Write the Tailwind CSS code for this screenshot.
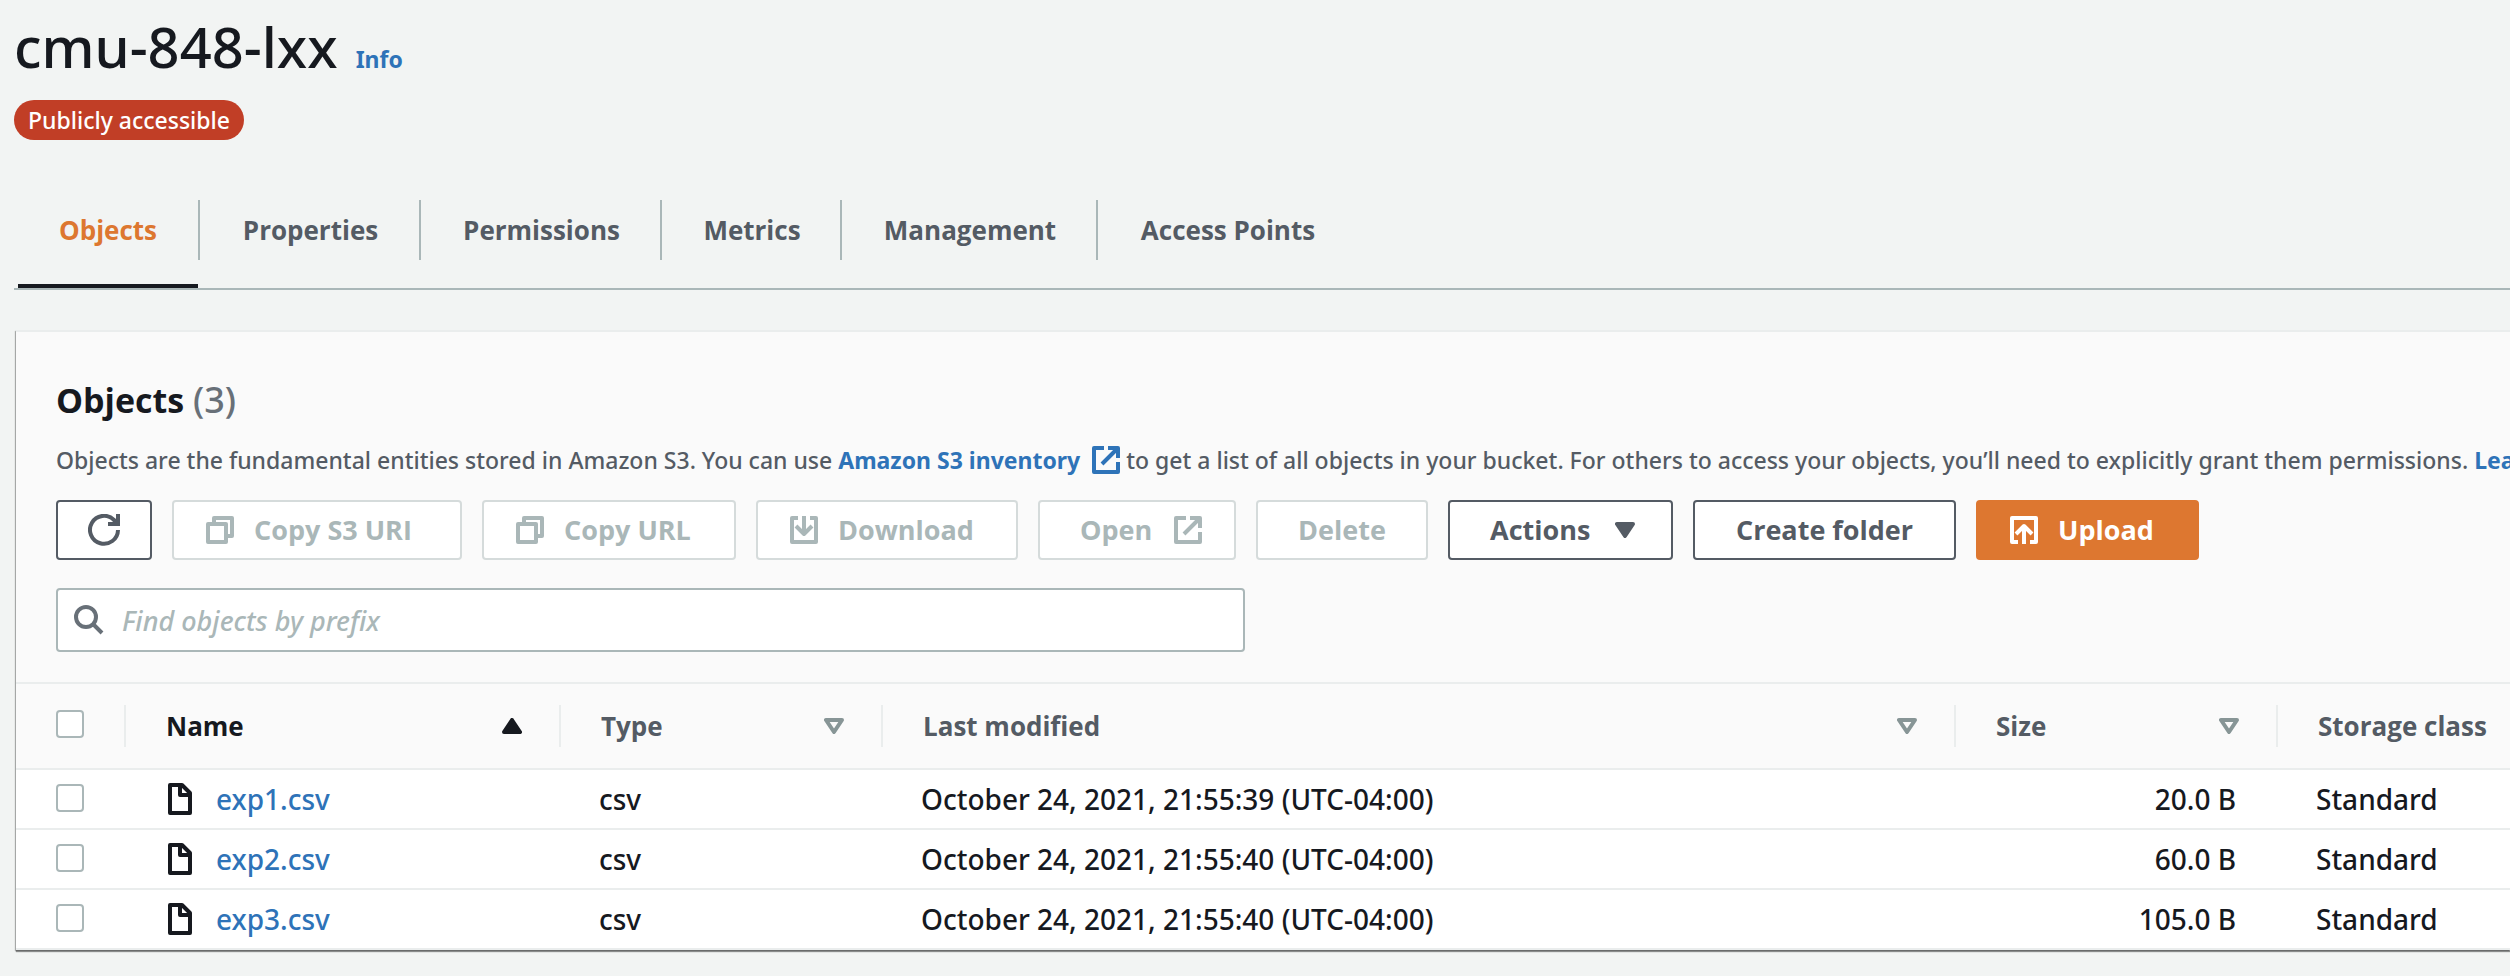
<!DOCTYPE html>
<html lang="en">
<head>
<meta charset="utf-8">
<title>cmu-848-lxx - S3 bucket</title>
<script src="https://cdn.jsdelivr.net/npm/@tailwindcss/browser@4"></script>
</head>
<body class="min-h-screen overflow-x-hidden bg-[#f2f4f3] font-['Open_Sans',sans-serif] text-[28px] leading-9 text-[#16191f]">
<svg class="hidden" aria-hidden="true">
  <symbol id="copy" viewBox="0 0 14 14"><path d="M4 3V1h9v9h-2M1 4h9v9H1z" fill="none" stroke="currentColor" stroke-width="2" stroke-linejoin="round"/></symbol>
  <symbol id="external" viewBox="0 0 14 14"><path d="M6 1H1v12h12V8M8 1h5v5M13 1 5 9" fill="none" stroke="currentColor" stroke-width="2" stroke-linejoin="round"/></symbol>
  <symbol id="download" viewBox="0 0 14 14"><path d="M4 1H1v12h12V1h-3M7 0v9M3 5l4 4 4-4" fill="none" stroke="currentColor" stroke-width="2" stroke-linejoin="round"/></symbol>
  <symbol id="upload" viewBox="0 0 14 14"><path d="M4 13H1V1h12v12h-3M7 14V5M3 9l4-4 4 4" fill="none" stroke="currentColor" stroke-width="2" stroke-linejoin="round"/></symbol>
  <symbol id="file" viewBox="0 0 12 16"><path d="M1 1h6l4 4v10H1zM6 1v5h5" fill="none" stroke="currentColor" stroke-width="2" stroke-linejoin="round"/></symbol>
  <symbol id="sort" viewBox="0 0 10 8"><path d="M1 1h8L5 7z" fill="none" stroke="currentColor" stroke-width="2" stroke-linejoin="round"/></symbol>
  <symbol id="caret" viewBox="0 0 10 8"><path d="M1 1h8L5 7z" fill="currentColor" stroke="currentColor" stroke-width="2" stroke-linejoin="round"/></symbol>
</svg>

<header class="pl-[14px] font-['Noto_Sans',sans-serif]">
  <div class="flex h-[84px] items-baseline gap-[18px]">
    <h1 class="pt-[10px] text-[56px] leading-[72px] font-medium">cmu-848-lxx</h1>
    <a href="#" class="text-[23px] font-bold text-[#2e73b8]">Info</a>
  </div>
  <span class="mt-4 inline-flex h-10 items-center rounded-[20px] bg-[#c13e26] px-[14px] text-[23px] font-medium text-white">Publicly accessible</span>
</header>

<nav class="mt-[52px] ml-[14px] border-b-2 border-[#aab7b8] pl-1 text-[26px] font-bold text-[#545b64]">
  <ul class="flex">
    <li class="relative h-24 w-[182px]"><a href="#" aria-current="page" class="block h-24 w-[180px] border-b-4 border-[#16191f] pt-5 text-center text-[#dd7730]">Objects</a><span class="absolute top-2 right-0 h-[60px] w-[2px] bg-[#aab7b8]"></span></li>
    <li class="relative h-24 w-[221px]"><a href="#" class="block pt-5 text-center">Properties</a><span class="absolute top-2 right-0 h-[60px] w-[2px] bg-[#aab7b8]"></span></li>
    <li class="relative h-24 w-[241px]"><a href="#" class="block pt-5 text-center">Permissions</a><span class="absolute top-2 right-0 h-[60px] w-[2px] bg-[#aab7b8]"></span></li>
    <li class="relative h-24 w-[180px]"><a href="#" class="block pt-5 text-center">Metrics</a><span class="absolute top-2 right-0 h-[60px] w-[2px] bg-[#aab7b8]"></span></li>
    <li class="relative h-24 w-[256px]"><a href="#" class="block pt-5 text-center">Management</a><span class="absolute top-2 right-0 h-[60px] w-[2px] bg-[#aab7b8]"></span></li>
    <li class="h-24 w-[260px]"><a href="#" class="block pt-5 text-center">Access Points</a></li>
  </ul>
</nav>

<main class="mt-10 ml-4 border-t-2 border-[#eaeded] bg-[#fafafa] shadow-[0_2px_1px_#00000066,-1px_1px_1px_#00000044]">
  <section class="pt-[42px] pl-10">
    <h2 class="text-[34px] leading-[52px] font-bold">Objects <span class="font-['Noto_Sans',sans-serif] text-4xl leading-[52px] font-medium text-[#687078]">(3)</span></h2>
    <p class="mt-[14px] flex h-10 items-center overflow-hidden font-['Noto_Sans',sans-serif] text-[23px] font-medium whitespace-pre text-[#545b64]"><span>Objects are the fundamental entities stored in Amazon S3. You can use </span><a href="#" class="flex items-center gap-3 font-bold text-[#2e73b8]"><span>Amazon S3 inventory</span><svg class="size-7"><use href="#external"/></svg></a><span> to get a list of all objects in your bucket. For others to access your objects, you’ll need to explicitly grant them permissions. </span><a href="#" class="font-bold text-[#2e73b8]">Learn more</a></p>
    <div class="mt-5 flex gap-5 text-[27px] font-bold text-[#545b64]">
      <button aria-label="Refresh" class="flex h-[60px] w-24 items-center justify-center rounded border-2 border-[#545b64] bg-white"><svg class="size-8" viewBox="0 0 16 16"><path d="M15 8a7 7 0 1 1-2-5l2 2M15 0v5h-5" fill="none" stroke="currentColor" stroke-width="2"/></svg></button>
      <button disabled class="flex h-[60px] w-[290px] items-center gap-5 rounded border-2 border-[#d5dbdb] bg-white pl-8 text-[#aab7b8]"><svg class="size-7"><use href="#copy"/></svg>Copy S3 URI</button>
      <button disabled class="flex h-[60px] w-[254px] items-center gap-5 rounded border-2 border-[#d5dbdb] bg-white pl-8 text-[#aab7b8]"><svg class="size-7"><use href="#copy"/></svg>Copy URL</button>
      <button disabled class="flex h-[60px] w-[262px] items-center gap-5 rounded border-2 border-[#d5dbdb] bg-white pl-8 text-[#aab7b8]"><svg class="size-7"><use href="#download"/></svg>Download</button>
      <button disabled class="flex h-[60px] w-[198px] items-center justify-between rounded border-2 border-[#d5dbdb] bg-white pr-8 pl-10 text-[#aab7b8]">Open<svg class="size-7"><use href="#external"/></svg></button>
      <button disabled class="h-[60px] w-[172px] rounded border-2 border-[#d5dbdb] bg-white text-[#aab7b8]">Delete</button>
      <button class="flex h-[60px] w-[225px] items-center justify-between rounded border-2 border-[#545b64] bg-white pr-9 pl-10">Actions<svg class="h-4 w-5"><use href="#caret"/></svg></button>
      <button class="h-[60px] w-[263px] rounded border-2 border-[#545b64] bg-white">Create folder</button>
      <button class="flex h-[60px] w-[223px] items-center gap-5 rounded border-2 border-[#dd7730] bg-[#dd7730] pl-8 text-white"><svg class="size-7"><use href="#upload"/></svg>Upload</button>
    </div>
    <label class="mt-7 flex h-16 w-[1189px] items-center gap-[18px] rounded border-2 border-[#aab7b8] bg-white px-4">
      <svg class="size-[30px] text-[#687078]" viewBox="0 0 15 15"><path d="M11 6A5 5 0 1 1 1 6a5 5 0 0 1 10 0zM9.500 9.500l4.500 4.500" fill="none" stroke="currentColor" stroke-width="2"/></svg>
      <input type="text" aria-label="Find objects by prefix" placeholder="Find objects by prefix" class="h-full flex-1 font-['Noto_Sans',sans-serif] text-[27px] font-medium outline-none placeholder:text-[#aab7b8] placeholder:italic">
    </label>
  </section>

  <table class="mt-[30px] w-full table-fixed border-collapse text-left">
    <colgroup><col class="w-[110px]"><col class="w-[435px]"><col class="w-[322px]"><col><col class="w-[322px]"><col class="w-[232px]"></colgroup>
    <thead class="border-y-2 border-[#eaeded] text-[26px] text-[#545b64]">
      <tr class="h-[86px]">
        <th class="p-0"><div class="flex h-[42px] items-center border-r-2 border-[#eaeded] pl-10"><input type="checkbox" aria-label="Select all" class="mb-1 size-7 appearance-none rounded border-2 border-[#aab7b8] bg-white"></div></th>
        <th class="p-0 text-[#16191f]"><div class="flex h-[42px] items-center justify-between border-r-2 border-[#eaeded] pr-[37px] pl-10">Name<svg class="h-4 w-5 rotate-180"><use href="#caret"/></svg></div></th>
        <th class="p-0"><div class="flex h-[42px] items-center justify-between border-r-2 border-[#eaeded] pr-[37px] pl-10">Type<svg class="h-4 w-5 text-[#879596]"><use href="#sort"/></svg></div></th>
        <th class="p-0"><div class="flex h-[42px] items-center justify-between border-r-2 border-[#eaeded] pr-[37px] pl-10">Last modified<svg class="h-4 w-5 text-[#879596]"><use href="#sort"/></svg></div></th>
        <th class="p-0"><div class="flex h-[42px] items-center justify-between border-r-2 border-[#eaeded] pr-[37px] pl-10">Size<svg class="h-4 w-5 text-[#879596]"><use href="#sort"/></svg></div></th>
        <th class="p-0 pl-10 whitespace-nowrap">Storage class</th>
      </tr>
    </thead>
    <tbody class="bg-white font-['Noto_Sans',sans-serif] font-medium">
      <tr class="h-[60px] border-b-2 border-[#eaeded]">
        <td class="pl-10"><input type="checkbox" aria-label="Select exp1.csv" class="mb-[2px] block size-7 appearance-none rounded border-2 border-[#aab7b8] bg-white"></td>
        <td class="pl-[42px]"><div class="flex items-center gap-6"><svg class="h-8 w-6"><use href="#file"/></svg><a href="#" class="text-[#2e73b8]">exp1.csv</a></div></td>
        <td class="pl-[38px]">csv</td><td class="pl-[38px]">October 24, 2021, 21:55:39 (UTC-04:00)</td><td class="pr-[42px] text-right">20.0 B</td><td class="pl-[38px]">Standard</td>
      </tr>
      <tr class="h-[60px] border-b-2 border-[#eaeded]">
        <td class="pl-10"><input type="checkbox" aria-label="Select exp2.csv" class="mb-[2px] block size-7 appearance-none rounded border-2 border-[#aab7b8] bg-white"></td>
        <td class="pl-[42px]"><div class="flex items-center gap-6"><svg class="h-8 w-6"><use href="#file"/></svg><a href="#" class="text-[#2e73b8]">exp2.csv</a></div></td>
        <td class="pl-[38px]">csv</td><td class="pl-[38px]">October 24, 2021, 21:55:40 (UTC-04:00)</td><td class="pr-[42px] text-right">60.0 B</td><td class="pl-[38px]">Standard</td>
      </tr>
      <tr class="h-[60px] border-b-2 border-[#eaeded]">
        <td class="pl-10"><input type="checkbox" aria-label="Select exp3.csv" class="mb-[2px] block size-7 appearance-none rounded border-2 border-[#aab7b8] bg-white"></td>
        <td class="pl-[42px]"><div class="flex items-center gap-6"><svg class="h-8 w-6"><use href="#file"/></svg><a href="#" class="text-[#2e73b8]">exp3.csv</a></div></td>
        <td class="pl-[38px]">csv</td><td class="pl-[38px]">October 24, 2021, 21:55:40 (UTC-04:00)</td><td class="pr-[42px] text-right">105.0 B</td><td class="pl-[38px]">Standard</td>
      </tr>
    </tbody>
  </table>
</main>
</body>
</html>
